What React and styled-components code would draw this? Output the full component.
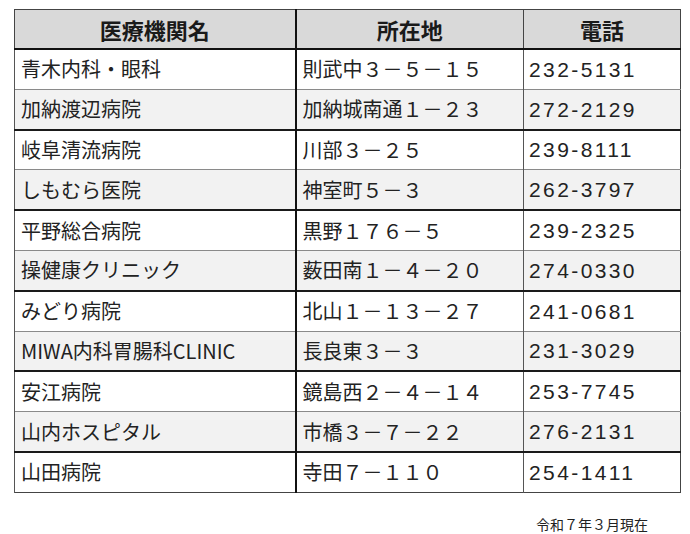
import styled, { createGlobalStyle } from "styled-components";

const rows = [
  ["青木内科・眼科", "則武中３－５－１５", "232-5131"],
  ["加納渡辺病院", "加納城南通１－２３", "272-2129"],
  ["岐阜清流病院", "川部３－２５", "239-8111"],
  ["しもむら医院", "神室町５－３", "262-3797"],
  ["平野総合病院", "黒野１７６－５", "239-2325"],
  ["操健康クリニック", "薮田南１－４－２０", "274-0330"],
  ["みどり病院", "北山１－１３－２７", "241-0681"],
  ["MIWA内科胃腸科CLINIC", "長良東３－３", "231-3029"],
  ["安江病院", "鏡島西２－４－１４", "253-7745"],
  ["山内ホスピタル", "市橋３－７－２２", "276-2131"],
  ["山田病院", "寺田７－１１０", "254-1411"],
];

const GlobalStyles = createGlobalStyle`
  body {
    margin: 0;
    background: #fff;
    font-family: "Noto Sans CJK JP", "Noto Sans", sans-serif;
    color: #222;
  }
`;

function App() {
  return (
    <>
      <GlobalStyles />
      <Page>
        <Table>
          <colgroup>
            <col style={{ width: 281 }} />
            <col style={{ width: 228 }} />
            <col style={{ width: 157 }} />
          </colgroup>
          <thead>
            <tr>
              <Head>医療機関名</Head>
              <Head>所在地</Head>
              <Head>電話</Head>
            </tr>
          </thead>
          <tbody>
            {rows.map((r, i) => (
              <Row key={r[0]} $shaded={i % 2 === 1}>
                <Cell>{r[0]}</Cell>
                <Cell>{r[1]}</Cell>
                <Phone>{r[2]}</Phone>
              </Row>
            ))}
          </tbody>
        </Table>
        <Note>令和７年３月現在</Note>
      </Page>
    </>
  );
}

const Page = styled.main`
  width: 690px;
  padding: 9px 0 0 14px;
  box-sizing: border-box;
  display: flex;
  flex-direction: column;
`;

const Table = styled.table`
  width: 666px;
  border-collapse: collapse;
  table-layout: fixed;
  border: 1px solid #444;
  & td:first-child,
  & th:first-child {
    border-right: 2px solid #111;
  }
`;

const Head = styled.th`
  height: 38px;
  padding: 0;
  background: #d9d9d9;
  border-bottom: 2px solid #111;
  border-left: 1px solid #444;
  font-size: 22px;
  font-weight: 700;
  color: #1a1a1a;
  text-align: center;
  line-height: 1;
`;

const Row = styled.tr`
  height: 40.3px;
  background: ${(p) => (p.$shaded ? "#f2f2f2" : "#fff")};
  border-top: ${(p) => (p.$shaded ? "1px solid #8a8a8a" : "2px solid #1a1a1a")};
`;

const Cell = styled.td`
  padding: 0 0 0 6px;
  border-left: 1px solid #555;
  font-size: 20px;
  line-height: 1;
  white-space: nowrap;
  overflow: hidden;
`;

const Phone = styled(Cell)`
  font-family: "Liberation Sans", Arial, sans-serif;
  font-size: 21px;
  letter-spacing: 2.4px;
  padding-left: 5px;
`;

const Note = styled.p`
  margin: 23px 0 0;
  width: 634px;
  text-align: right;
  font-size: 14px;
  line-height: 16px;
  color: #222;
`;

export default App;
